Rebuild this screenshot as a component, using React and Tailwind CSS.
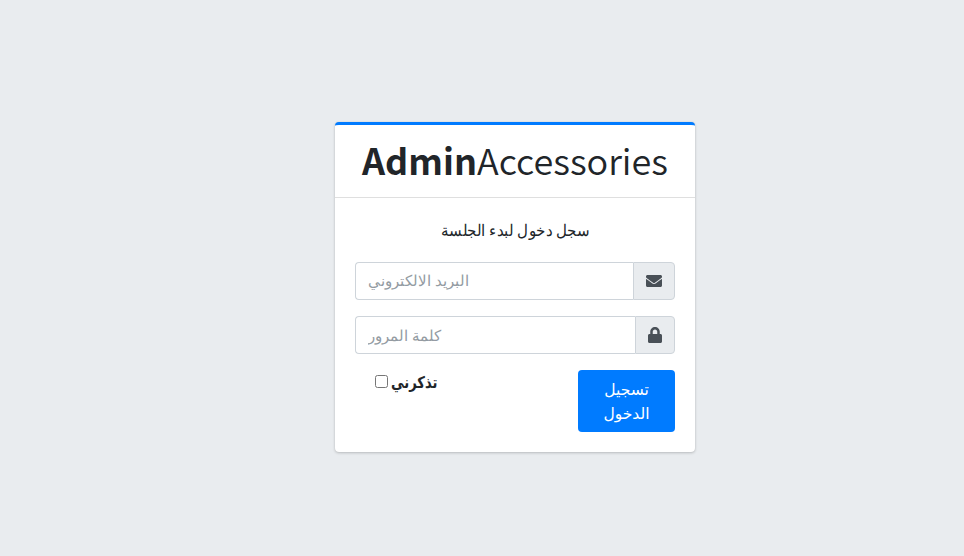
import { FaEnvelope, FaLock } from "react-icons/fa";

function Field({ type, placeholder, icon, textClass }) {
  return (
    <div className="mb-4 flex h-[38px]">
      <input
        type={type}
        dir="ltr"
        placeholder={placeholder}
        className={`min-w-0 flex-1 rounded-l border border-r-0 border-[#ced4da] bg-white px-3 text-[#495057] outline-none placeholder:text-[#939ba2] ${textClass}`}
      />
      <span className="flex items-center rounded-r border border-[#ced4da] bg-[#e9ecef] px-3 text-base text-[#495057]">
        {icon}
      </span>
    </div>
  );
}

export default function App() {
  return (
    <div className="flex h-screen items-start bg-[#e9ecef] pl-[335px] pt-[122px] font-['Noto_Sans','DejaVu_Sans',sans-serif] text-base leading-6 text-[#212529]">
      <main className="h-[330px] w-[360px] rounded border-t-[3px] border-[#007bff] bg-white shadow-[0_0_1px_rgba(0,0,0,0.125),0_1px_3px_rgba(0,0,0,0.2)]">
        <header className="flex h-[73px] items-center justify-center border-b border-black/[0.125]">
          <h1 className="-mt-[5px] whitespace-nowrap font-['Noto_Sans_CJK_SC',sans-serif] text-[36px] leading-[48px] font-[350]">
            <b className="font-bold">Admin</b>Accessories
          </h1>
        </header>
        <div className="p-5">
          <p className="mb-5 scale-x-[0.94] text-center text-base font-light">سجل دخول لبدء الجلسة</p>
          <Field
            type="email"
            placeholder="البريد الالكتروني"
            icon={<FaEnvelope />}
            textClass="text-[15.4px] font-light"
          />
          <Field
            type="password"
            placeholder="كلمة المرور"
            icon={<FaLock className="w-[14px]" />}
            textClass="text-[15px] font-light"
          />
          <div className="flex items-start justify-between">
            <label className="ml-5 flex items-center gap-[3px] font-semibold">
              <input type="checkbox" className="-mt-0.5 size-[13px]" />
              <span className="origin-left scale-x-[0.82]">تذكرني</span>
            </label>
            <button className="h-[62px] w-[97px] rounded bg-[#007bff] px-3 text-center text-[15.5px] leading-6 text-white">
              تسجيل<br />الدخول
            </button>
          </div>
        </div>
      </main>
    </div>
  );
}
